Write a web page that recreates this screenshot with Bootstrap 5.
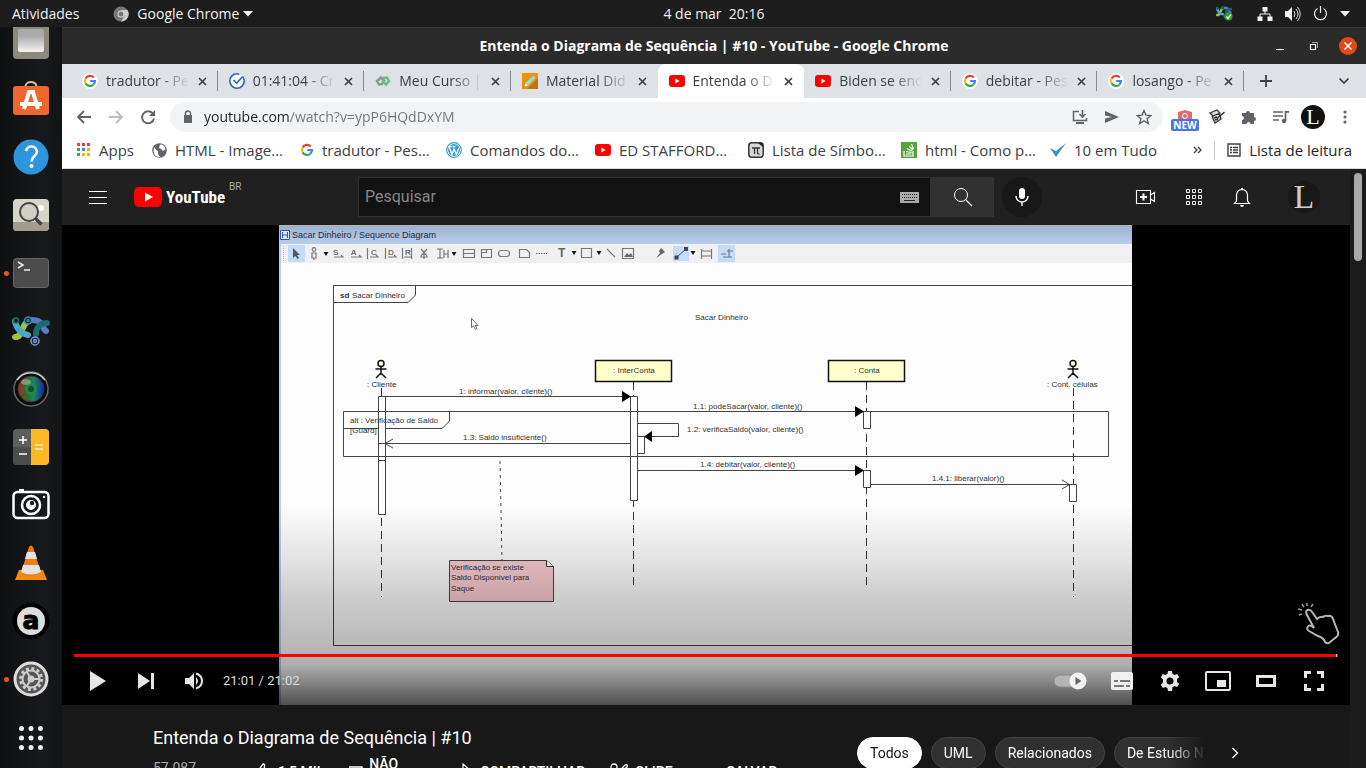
<!DOCTYPE html>
<html lang="pt-BR">
<head>
<meta charset="utf-8">
<meta name="viewport" content="width=device-width, initial-scale=1">
<title>Entenda o Diagrama de Sequência | #10 - YouTube</title>
<link rel="stylesheet" href="https://cdn.jsdelivr.net/npm/bootstrap@5.3.0/dist/css/bootstrap.min.css">
<style>
:root{--dock:62px}
body{font-family:"Open Sans","Noto Sans",sans-serif;font-size:14px;line-height:20px;background:#181818;color:#3c4043}
button{background:none;border:0;padding:0;color:inherit}
svg{display:block;flex:none}
a{color:inherit;text-decoration:none}
.topbar{display:grid;grid-template-columns:1fr auto 1fr;height:27px;flex:none;background:#1d1d1d;color:#f2f2f2;padding:0 16px}
.topbar .launcher{margin-left:34px}
.clock{padding-left:var(--dock)}
.dock{width:var(--dock);flex:none;background:linear-gradient(90deg,#0e1012,#17191c 70%,#111315);overflow:hidden}
.dock button{height:58px;flex:none;position:relative;width:100%;display:grid;place-items:center}
.dock .apps-grid{height:60px}
.running::before{content:"";position:absolute;left:4px;top:27px;width:5px;height:5px;border-radius:50%;background:#e95420}
.titlebar{height:37px;flex:none;background:#2b2b2b;border-top:1px solid #3a3a3a;color:#fff;font-weight:700;display:grid;grid-template-columns:1fr auto 1fr;padding:0 9px}
.win-btns{gap:20px}
.win-close{width:18px;height:18px;border-radius:50%;background:#df4a16;display:grid;place-items:center}
.tabstrip{height:34px;flex:none;background:#dee1e6;padding:0 16px 0 9px}
.tabs{flex:0 1 1173px;min-width:0}
.tab{flex:1 1 0;min-width:0;height:34px;padding:0 11px;gap:8px;position:relative}
.tab:not(.active)::after{content:"";position:absolute;right:0;top:7px;height:20px;width:1px;background:#878b90}
.tab.pre::after{display:none}
.tab.active{background:#fff;border-radius:8px 8px 0 0}
.tab-title{flex:1;white-space:nowrap;overflow:hidden;-webkit-mask-image:linear-gradient(90deg,#000 62%,transparent);mask-image:linear-gradient(90deg,#000 62%,transparent)}
.toolbar{height:38px;flex:none;background:#fff;padding:0 15px;color:#5f6368}
.toolbar .nav-btns{gap:18px;margin-right:15px}
.omnibox{height:30px;border-radius:15px;background:#f1f3f4;padding:0 11px 0 10px;gap:8px}
.omnibox input{border:0;outline:0;flex:1;min-width:0;background:linear-gradient(90deg,#202124 85px,#70757a 85px);-webkit-background-clip:text;background-clip:text;-webkit-text-fill-color:transparent;padding:0}
.omnibox .acts{gap:16px}
.exts{gap:8px;margin-left:10px;margin-right:-6px}
.exts>button{width:24px;height:24px;display:grid;place-items:center;position:relative}
.new-tag{position:absolute;left:-2px;bottom:-2px;width:28px;height:12px;border-radius:2px;background:#4c74e8;color:#fff;font-size:10px;line-height:12px;font-weight:700}
.bookmarks{height:33px;flex:none;background:#fff;border-bottom:1px solid #dadce0;padding:0 14px 0 15px;display:grid;grid-template-columns:75px 148px 146px 149px 153px 153px 149px 1fr auto;white-space:nowrap;font-size:15px}
.bookmarks a,.bookmarks>div{gap:8px;height:28px}
.page{background:#181818;overflow:hidden;font-family:Roboto,"Liberation Sans",sans-serif;color:#fff}
.masthead{height:56px;flex:none;background:#202020;padding:0 30px 0 26px}
.brand{flex:0 0 270px;gap:26px}
.wordmark{font-family:"Roboto Condensed","Liberation Sans Narrow","Roboto",sans-serif;font-weight:700;font-size:17px;line-height:24px}
.country{font-size:10px;line-height:12px;color:#aaa;margin:-20px 0 0 4px}
.search{flex:0 1 684px;gap:8px}
.search-box{height:40px;background:#121212;border:1px solid #303030;padding:0 11px 0 6px}
.search-box input{background:none;border:0;outline:0;color:#fff;font-size:16px;flex:1;min-width:0;padding:0}
.search-box input::placeholder{color:#888;opacity:1}
.search-btn{width:63px;height:40px;background:#313131;display:grid;place-items:center}
.mic{width:40px;height:40px;border-radius:50%;background:#181818;display:grid;place-items:center}
.mast-right{gap:24px}
.mast-right>button{width:24px;height:24px;display:grid;place-items:center}
.avatar{border-radius:50%;font-family:"Liberation Serif",serif;color:#ccc;background:#181818;overflow:hidden}
.mast-right>.avatar{width:32px;height:32px;margin-left:10px;font-size:34px;line-height:28px}
.exts>.avatar{background:#111;color:#fff;font-size:22px;line-height:22px}
.player{height:62.5vh;min-height:480px;background:#000;position:relative;flex:none}
.player>svg.film{height:100%;width:100%}
.shade{position:absolute;left:0;right:0;bottom:0;height:200px;background:linear-gradient(rgba(0,0,0,0),rgba(0,0,0,.11) 28%,rgba(0,0,0,.2) 48%,rgba(0,0,0,.27) 70%,rgba(0,0,0,.31) 80%,rgba(0,0,0,.5) 90%,rgba(0,0,0,.69))}
.controls{position:absolute;left:12px;right:12px;bottom:0}
.seek{appearance:none;-webkit-appearance:none;display:block;width:100%;height:3px;margin:0;background:red}
.seek::-webkit-slider-thumb{-webkit-appearance:none;width:1px;height:3px;background:#ccc}
.controls button{width:48px;height:48px;display:grid;place-items:center}
.time{font-size:13px;color:#ddd;margin-left:5px}
.hand{position:absolute;right:10px;bottom:60px}
.below{max-width:1106px;width:100%;gap:24px}
.primary{min-width:0;padding-top:21px}
.video-title{font-size:18px;line-height:24px;font-weight:400;margin:0}
.views{width:87px;color:#aaa;line-height:32px;margin-right:14px}
.actions{font-size:14px;line-height:16px;font-weight:500;height:40px;margin-top:2px}
.actions button{display:flex;align-items:center;text-align:left;gap:6px;font-weight:500;flex:none}
.actions .dislike{width:84px;gap:5px}
.side{flex:0 0 402px;padding-top:32px}
.chips{gap:9px;flex:0 0 350px;overflow:hidden;-webkit-mask-image:linear-gradient(90deg,#000 310px,transparent 350px);mask-image:linear-gradient(90deg,#000 310px,transparent 350px)}
.chip{height:32px;border-radius:16px;padding:0 12px;background:#303030;border:1px solid #444;font-size:14px;white-space:nowrap;flex:none}
.chip.on{background:#fff;color:#111;border-color:#fff}
.scroller{width:16px;flex:none;background:#1b1b1b;padding:4px}
.scroller div{height:88px;border-radius:4px;background:#a9a9a9}
.dg text{font-family:"Liberation Sans",Arial,sans-serif;font-size:8px;fill:#333}
.dg text.cap{font-size:9px;fill:#1e2a44}
.dg .ln{fill:none;stroke:#444;stroke-width:1}
.dg .wh{fill:#fff;stroke:#444;stroke-width:1}
</style>
</head>
<body class="vh-100 d-flex flex-column overflow-hidden">

<svg width="0" height="0" class="position-absolute" aria-hidden="true">
  <symbol id="g" viewBox="0 0 16 16"><circle cx="8" cy="8" r="8" fill="#fff"/><g fill="none" stroke-width="2.2"><path d="M11.8 4.6A5 5 0 0 0 3.6 5.6" stroke="#ea4335"/><path d="M3.6 5.6a5 5 0 0 0 0 4.8" stroke="#fbbc05"/><path d="M3.6 10.4a5 5 0 0 0 7.7 1.3" stroke="#34a853"/><path d="M11.3 11.7A5 5 0 0 0 13 8H8.2" stroke="#4285f4"/></g></symbol>
  <symbol id="yt" viewBox="0 0 16 16"><rect y="2" width="16" height="12" rx="3.2" fill="#f00"/><path d="M6.4 5.6v4.8L10.6 8z" fill="#fff"/></symbol>
  <symbol id="x" viewBox="0 0 9 9"><path d="M1 1l7 7M8 1L1 8" stroke="#3c4043" stroke-width="1.7"/></symbol>
  <symbol id="jelly" viewBox="0 0 38 30"><g fill="none" stroke-width="6" stroke-linecap="round"><path d="M20 4q8 0 10 5t4 6" stroke="#5a7bc0"/><path d="M3 21c8 1 6-14 14-16" stroke="#9cc53b"/><path d="M3 5c1 8 7 13 13 14" stroke="#4aa8c8"/><path d="M24 18c0-8 6-11 11-11" stroke="#1d6a6e"/></g><g fill="#17191c" stroke-width="1.5"><circle cx="16" cy="4.500" r="3.500" stroke="#2d8fb0"/><circle cx="16" cy="4.500" r="1" stroke="#2d8fb0"/><circle cx="23" cy="25" r="4" stroke="#7a98d8"/><circle cx="23" cy="25" r="1.500" stroke="#7a98d8"/><circle cx="4" cy="4.500" r="2.500" stroke="#1d6a6e"/></g></symbol>
</svg>

<header class="topbar align-items-center">
  <div class="d-flex align-items-center" style="margin-left:-4px">
    <button>Atividades</button>
    <button class="launcher d-flex align-items-center">
      <svg class="me-2" width="16" height="16" viewBox="0 0 16 16"><circle cx="8" cy="8" r="7.500" fill="#777"/><path d="M8 4h6.500A7.500 7.500 0 0 1 8 15.500L11.500 10z" fill="#ccc"/><circle cx="8" cy="8" r="3.500" fill="#ddd"/><circle cx="8" cy="8" r="2.500" fill="#777"/></svg>
      <span>Google Chrome</span>
      <svg class="ms-1" width="10" height="6" viewBox="0 0 10 6"><path d="M0 0h10L5 5.500z" fill="#f2f2f2"/></svg>
    </button>
  </div>
  <div class="clock">4 de mar&nbsp; 20:16</div>
  <div class="d-flex align-items-center justify-content-end gap-2">
    <svg class="me-3" width="17" height="15" viewBox="0 0 17 15"><use href="#jelly" width="16" height="13"/><circle cx="12.500" cy="10.500" r="4" fill="#2f9e2f"/><path d="M10.500 10.500l1.500 2 3-4" stroke="#fff" stroke-width="1.300" fill="none"/></svg>
    <svg class="me-1" width="16" height="14" viewBox="0 0 16 14"><path d="M8 4v3M3 10V7h10v3" stroke="#f2f2f2" fill="none"/><path d="M5.500 0h5v4.500h-5zM.500 9.500h5V14h-5zM10.500 9.500h5V14h-5z" fill="#f2f2f2"/></svg>
    <svg class="me-1" width="16" height="16" viewBox="0 0 16 16"><path d="M0 5h3l4-4v14l-4-4H0z" fill="#f2f2f2"/><path d="M9 5q2 3 0 6M11 3q4 5 0 10M12.500 1q5.500 7 0 14" stroke="#ddd" fill="none"/></svg>
    <svg class="me-1" width="15" height="15" viewBox="0 0 15 15"><path d="M4.500 2.500a6 6 0 1 0 6 0M7.500 0v7" stroke="#f2f2f2" stroke-width="1.200" fill="none"/></svg>
    <svg width="10" height="6" viewBox="0 0 10 6"><path d="M0 0h10L5 5.500z" fill="#f2f2f2"/></svg>
  </div>
</header>

<div class="d-flex flex-grow-1" style="min-height:0">
  <nav class="dock d-flex flex-column justify-content-end align-items-center" aria-label="Dock">
    <button aria-label="Arquivos"><svg width="36" height="36" viewBox="0 0 36 36"><defs><linearGradient id="fl" x2="0" y2="1"><stop offset=".3" stop-color="#aaa"/><stop offset="1" stop-color="#f6f6f6"/></linearGradient></defs><rect width="36" height="36" rx="4" fill="#8d897c"/><rect x="5" y="6" width="26" height="23" rx="2" fill="url(#fl)"/></svg></button>
    <button aria-label="Ubuntu Software"><svg width="36" height="36" viewBox="0 0 36 36"><path d="M12 8q0-7 6-7t6 7" fill="none" stroke="#dcc9a4" stroke-width="1.800"/><rect y="5" width="36" height="29" rx="3" fill="#f0662f"/><path d="M11 28l5-17h4l5 17M7 23h22" fill="none" stroke="#fff" stroke-width="4"/></svg></button>
    <button aria-label="Ajuda"><svg width="36" height="36" viewBox="0 0 36 36"><circle cx="18" cy="18" r="17.500" fill="#2e94dd"/><path d="M13 12q1-4.500 5.500-4.500T24 12.500c0 4.500-5.500 4.500-5.500 10" fill="none" stroke="#fff" stroke-width="2.600"/><circle cx="18.500" cy="27" r="2" fill="#fff"/></svg></button>
    <button aria-label="Visualizador"><svg width="36" height="32" viewBox="0 0 36 32"><rect width="36" height="32" rx="4" fill="#d5d5c9"/><path d="M0 23h36v5q0 4-4 4H4q-4 0-4-4z" fill="#a39c8b"/><circle cx="28" cy="9" r="3" fill="#fff"/><circle cx="16" cy="13" r="9" fill="#cfcfc8" stroke="#444" stroke-width="2"/><path d="M22.500 19.500l6 6" stroke="#444" stroke-width="3.500"/></svg></button>
    <button class="running" aria-label="Terminal"><svg width="36" height="30" viewBox="0 0 36 30"><rect x=".500" y=".500" width="35" height="29" rx="3" fill="#4b4b4b" stroke="#686868"/><path d="M5 4l5 3-5 3M11 12h6" stroke="#eee" stroke-width="1.500" fill="none"/></svg></button>
    <button aria-label="Astah"><svg width="38" height="30"><use href="#jelly"/></svg></button>
    <button aria-label="Câmera"><svg width="38" height="38" viewBox="0 0 38 38"><defs><linearGradient id="rb"><stop stop-color="#b3261e"/><stop offset=".35" stop-color="#2b6b2b"/><stop offset=".6" stop-color="#1c8a5a"/><stop offset="1" stop-color="#1226b8"/></linearGradient></defs><circle cx="19" cy="19" r="17" fill="#0a0a0a" stroke="#666" stroke-width="1.500"/><path d="M5 10a17 17 0 0 1 28 0" fill="none" stroke="#ccc" stroke-width="1.500"/><circle cx="19" cy="19" r="13" fill="url(#rb)" stroke="#333"/><circle cx="19" cy="19" r="6" fill="#1f8a4c"/><circle cx="19" cy="19" r="3" fill="#124e30"/><ellipse cx="14" cy="12" rx="5" ry="3" fill="#fff" opacity=".35"/></svg></button>
    <button aria-label="Calculadora"><svg width="36" height="36" viewBox="0 0 36 36"><rect width="36" height="36" rx="4" fill="#5e5e5e"/><path d="M0 18h18v18H4q-4 0-4-4z" fill="#4d4d4d"/><path d="M18 0h14q4 0 4 4v28q0 4-4 4H18z" fill="#fdb827"/><path d="M6 11h8M10 7v8M6 25h8" stroke="#fff" stroke-width="1.500"/><path d="M22 16h8M22 20h8" stroke="#ffe3a0" stroke-width="1.800"/></svg></button>
    <button aria-label="Webcam"><svg width="38" height="34" viewBox="0 0 38 34"><rect x="1.500" y="4" width="35" height="26" rx="4" fill="none" stroke="#fff" stroke-width="2.500"/><path d="M7 1h5v3H7z" fill="#fff"/><circle cx="19" cy="17" r="9" fill="none" stroke="#fff" stroke-width="2.500"/><circle cx="19" cy="17" r="5" fill="#fff"/><circle cx="20" cy="15" r="2.200" fill="#17191c"/><circle cx="32" cy="9" r="1.200" fill="#fff"/></svg></button>
    <button aria-label="VLC"><svg width="34" height="36" viewBox="0 0 34 36"><path d="M5 25h24l4 10H1z" fill="#f28a0e"/><path d="M15 2q2-3 4 0l8 26q-10 6-20 0z" fill="#f07d12"/><path d="M13 7h8l2 7H11zM9 20h16l2 7q-10 5-20 0z" fill="#e3e3e3"/></svg></button>
    <button aria-label="Anki"><svg width="38" height="38" viewBox="0 0 38 38"><circle cx="19" cy="19" r="18.500" fill="#000"/><circle cx="19" cy="19" r="14" fill="#ddd"/><text x="19" y="27" text-anchor="middle" font-family="DejaVu Sans,sans-serif" font-weight="700" font-size="25" stroke="#000">a</text></svg></button>
    <button class="running" aria-label="Configurações"><svg width="36" height="36" viewBox="0 0 36 36"><circle cx="18" cy="18" r="16" fill="#555" stroke="#ddd" stroke-width="3"/><circle cx="18" cy="18" r="10.500" fill="none" stroke="#ccc" stroke-width="3" stroke-dasharray="3 2.500"/><circle cx="18" cy="18" r="8.500" fill="none" stroke="#ccc" stroke-width="2"/><circle cx="18" cy="18" r="3.500" fill="#ccc"/><path d="M18 18l-4-7M18 18l-4 7M18 18h8" stroke="#ccc" stroke-width="2"/></svg></button>
    <button class="apps-grid" aria-label="Mostrar aplicativos"><svg width="24" height="24" viewBox="0 0 24 24"><path d="M2.500 2.500h.01M12 2.500h.01M21.500 2.500h.01M2.500 12h.01M12 12h.01M21.500 12h.01M2.500 21.500h.01M12 21.500h.01M21.500 21.500h.01" stroke="#f2f2f2" stroke-width="5" stroke-linecap="round"/></svg></button>
  </nav>

  <div class="d-flex flex-column flex-grow-1" style="min-width:0">
    <div class="titlebar align-items-center">
      <span></span><span>Entenda o Diagrama de Sequência | #10 - YouTube - Google Chrome</span>
      <div class="win-btns d-flex align-items-center justify-content-end">
        <button class="me-1" aria-label="Minimizar"><svg width="10" height="8" viewBox="0 0 10 8"><path d="M1 7.500h8" stroke="#fff"/></svg></button>
        <button aria-label="Restaurar"><svg width="10" height="10" viewBox="0 0 10 10"><path d="M1.500 3.500h5v5h-5z" stroke="#fff" fill="none" stroke-width="1.200"/><path d="M3 1.500h5.500V7" stroke="#aaa" fill="none"/></svg></button>
        <button class="win-close" aria-label="Fechar"><svg width="8" height="8" viewBox="0 0 8 8"><path d="M.500.500l7 7M7.500.500l-7 7" stroke="#fff" stroke-width="1.500"/></svg></button>
      </div>
    </div>

    <div class="tabstrip d-flex align-items-center">
      <div class="tabs d-flex">
        <div class="tab d-flex align-items-center"><svg width="16" height="16"><use href="#g"/></svg><span class="tab-title">tradutor - Pe</span><button aria-label="Fechar"><svg width="9" height="9"><use href="#x"/></svg></button></div>
        <div class="tab d-flex align-items-center"><svg width="16" height="16" viewBox="0 0 16 16"><circle cx="8" cy="8" r="7.200" fill="#fff" stroke="#2f62c4" stroke-width="1.600" stroke-dasharray="36 4"/><path d="M4.500 7l3.200 3 5.500-6" fill="none" stroke="#2f62c4" stroke-width="1.600"/></svg><span class="tab-title">01:41:04 - Cr</span><button aria-label="Fechar"><svg width="9" height="9"><use href="#x"/></svg></button></div>
        <div class="tab d-flex align-items-center"><svg width="16" height="16" viewBox="0 0 16 16"><g fill="none" stroke-width="2.500"><path d="M8 11L4 11.500 2 8l4-3.500 4 4" stroke="#8b9a90"/><path d="M7 8l4 3.500L14 8l-2-3.500-4 .500" stroke="#6dbb83"/></g></svg><span class="tab-title">Meu Curso |</span><button aria-label="Fechar"><svg width="9" height="9"><use href="#x"/></svg></button></div>
        <div class="tab pre d-flex align-items-center"><svg width="16" height="16" viewBox="0 0 16 16"><path d="M0 0h16v16H0z" fill="#e8930c"/><path d="M16 5v11H5z" fill="#bf7406"/><path d="M4 12l8-8" stroke="#8fe3c8" stroke-width="3.500"/><path d="M2.500 13.500l1-3 2 2z" fill="#fff"/><path d="M11 3l2 2" stroke="#f4a0b5" stroke-width="2"/></svg><span class="tab-title">Material Did</span><button aria-label="Fechar"><svg width="9" height="9"><use href="#x"/></svg></button></div>
        <div class="tab active d-flex align-items-center"><svg width="16" height="16"><use href="#yt"/></svg><span class="tab-title">Entenda o D</span><button aria-label="Fechar"><svg width="9" height="9"><use href="#x"/></svg></button></div>
        <div class="tab d-flex align-items-center"><svg width="16" height="16"><use href="#yt"/></svg><span class="tab-title">Biden se enc</span><button aria-label="Fechar"><svg width="9" height="9"><use href="#x"/></svg></button></div>
        <div class="tab d-flex align-items-center"><svg width="16" height="16"><use href="#g"/></svg><span class="tab-title">debitar - Pes</span><button aria-label="Fechar"><svg width="9" height="9"><use href="#x"/></svg></button></div>
        <div class="tab d-flex align-items-center"><svg width="16" height="16"><use href="#g"/></svg><span class="tab-title">losango - Pe</span><button aria-label="Fechar"><svg width="9" height="9"><use href="#x"/></svg></button></div>
      </div>
      <button class="ms-3" aria-label="Nova guia"><svg width="12" height="12" viewBox="0 0 12 12"><path d="M6 0v12M0 6h12" stroke="#3c4043" stroke-width="1.800"/></svg></button>
      <button class="ms-auto" aria-label="Pesquisar guias"><svg width="12" height="8" viewBox="0 0 12 8"><path d="M1.500 1.500L6 6l4.500-4.500" stroke="#3c4043" stroke-width="1.700" fill="none"/></svg></button>
    </div>

    <div class="toolbar d-flex align-items-center">
      <div class="nav-btns d-flex">
        <button aria-label="Voltar"><svg width="14" height="14" viewBox="0 0 14 14"><path d="M14 7H1.500M7 1L1 7l6 6" fill="none" stroke="#5f6368" stroke-width="1.800"/></svg></button>
        <button aria-label="Avançar"><svg width="14" height="14" viewBox="0 0 14 14"><path d="M0 7h12.500M7 1l6 6-6 6" fill="none" stroke="#babcbe" stroke-width="1.800"/></svg></button>
        <button aria-label="Recarregar"><svg width="14" height="14" viewBox="0 0 14 14"><path d="M11.800 3.500A6 6 0 1 0 13 8.500" fill="none" stroke="#5f6368" stroke-width="1.900"/><path d="M14 0v6H8z" fill="#5f6368"/></svg></button>
      </div>
      <div class="omnibox d-flex align-items-center flex-grow-1">
        <svg width="16" height="14" viewBox="0 0 16 14"><path d="M4 5h8v8H4z" fill="#5f6368"/><path d="M5.500 6V3.500a2.500 2.500 0 0 1 5 0V6" fill="none" stroke="#5f6368" stroke-width="1.500"/></svg>
        <input type="text" aria-label="Endereço" value="youtube.com/watch?v=ypP6HQdDxYM">
        <div class="acts d-flex align-items-center">
          <button aria-label="Instalar"><svg width="16" height="16" viewBox="0 0 16 16"><path d="M7 2.500H1.500v9h13V9" fill="none" stroke="#5f6368" stroke-width="1.500"/><path d="M4 14h8" stroke="#5f6368" stroke-width="2"/><path d="M10.500 1v6.500M7.500 5l3 3 3-3" fill="none" stroke="#5f6368" stroke-width="1.600"/></svg></button>
          <button aria-label="Enviar"><svg width="16" height="16" viewBox="0 0 16 16"><path d="M1 2l14 6-14 6V9.500L8 8 1 6.500z" fill="#5f6368"/></svg></button>
          <button aria-label="Favorito"><svg width="16" height="16" viewBox="0 0 16 16"><path d="M8 1.500l1.900 4.600 4.900.400-3.700 3.200 1.200 4.800L8 11.900l-4.300 2.600 1.200-4.800L1.200 6.500l4.900-.400z" fill="none" stroke="#5f6368" stroke-width="1.400"/></svg></button>
        </div>
      </div>
      <div class="exts d-flex align-items-center">
        <button aria-label="Bloqueador"><svg width="16" height="16" viewBox="0 0 16 16"><path d="M1 3l7-2 7 2v8H1z" fill="#e5686c"/><circle cx="8" cy="7" r="2.500" fill="none" stroke="#fff"/></svg><span class="new-tag">NEW</span></button>
        <button aria-label="Notas"><svg width="16" height="16" viewBox="0 0 16 16"><path d="M1 4l7-3 3 3-7 3zM3 7l3 7 6-4-2-6" fill="#ddd" stroke="#333" stroke-width="1.300"/><path d="M5 9l3-1M6 11l3-1M15.500 3L8 9.500" fill="none" stroke="#333" stroke-width="1.500"/></svg></button>
        <button aria-label="Extensões"><svg width="16" height="16" viewBox="0 0 16 16"><path d="M1 4h4a2 2 0 1 1 4 0h4v4a2 2 0 1 1 0 4v3H9.500a2 2 0 0 0-4 0H1v-4a2 2 0 0 0 0-4z" fill="#5f6368"/></svg></button>
        <button aria-label="Mídia"><svg width="16" height="14" viewBox="0 0 16 14"><path d="M0 2h10M0 6h10M0 10h6M12.500 11V1.800H16" fill="none" stroke="#5f6368" stroke-width="1.700"/><circle cx="11" cy="11" r="2.200" fill="#5f6368"/></svg></button>
        <button class="avatar" aria-label="Perfil">L</button>
        <button aria-label="Menu"><svg width="4" height="14" viewBox="0 0 4 14"><path d="M2 2h.01M2 7h.01M2 12h.01" stroke="#5f6368" stroke-width="3.200" stroke-linecap="round"/></svg></button>
      </div>
    </div>

    <nav class="bookmarks" aria-label="Favoritos">
      <a href="#" class="d-flex align-items-center"><svg width="14" height="14" viewBox="0 0 14 14"><path d="M0 0h3v3H0zM5 0h3v3H5zM10 0h3v3h-3z" fill="#ea4335"/><path d="M0 5h3v3H0zM0 10h3v3H0z" fill="#34a853"/><path d="M5 5h3v3H5z" fill="#4285f4"/><path d="M10 5h3v3h-3zM5 10h3v3H5zM10 10h3v3h-3z" fill="#fbae05"/></svg>Apps</a>
      <a href="#" class="d-flex align-items-center"><svg width="15" height="15" viewBox="0 0 15 15"><circle cx="7.500" cy="7.500" r="7.300" fill="#5f6368"/><path d="M2 4q3 4 4 4v3l2 3q-6 0-6.500-6zM8 1.500q5 0 5.500 5L11 8 9 6l-2-1z" fill="#fff"/></svg>HTML - Image…</a>
      <a href="#" class="d-flex align-items-center"><svg width="14" height="16" viewBox="1 0 14 16"><use href="#g" width="16" height="16"/></svg>tradutor - Pes…</a>
      <a href="#" class="d-flex align-items-center"><svg width="16" height="16" viewBox="0 0 16 16"><circle cx="8" cy="8" r="7.300" fill="#fff" stroke="#3a9bd6" stroke-width="1.200"/><circle cx="8" cy="8" r="6" fill="#3a9bd6"/><path d="M3 4.500l3 8L8 7l2.500 5.500 2.500-7M2.500 4.500h3M6.500 4.500h3" fill="none" stroke="#fff" stroke-width="1.300"/></svg>Comandos do…</a>
      <a href="#" class="d-flex align-items-center"><svg width="16" height="16"><use href="#yt"/></svg>ED STAFFORD…</a>
      <a href="#" class="d-flex align-items-center"><svg width="16" height="16" viewBox="0 0 16 16"><rect x=".800" y=".800" width="14.400" height="14.400" rx="3" fill="#d8d8d8" stroke="#333" stroke-width="1.500"/><path d="M4 6h8M6.500 6v6M9.500 6v5q0 1 2 1" stroke="#333" stroke-width="1.300" fill="none"/><path d="M10 1h5v4z" fill="#222"/></svg>Lista de Símbo…</a>
      <a href="#" class="d-flex align-items-center"><svg width="16" height="16" viewBox="0 0 16 16"><path d="M0 0h16v16H0z" fill="#55a63a"/><path d="M3 9v5h9V9M5 12h5.500M5 9.500l5.500 1M6 6.500l5 2.500M8 4l4 4M10.500 2l2 5" fill="none" stroke="#fff" stroke-width="1.200"/></svg>html - Como p…</a>
      <a href="#" class="d-flex align-items-center"><svg width="16" height="16" viewBox="0 0 16 16"><path d="M0 6l6 9L16 1 6 9z" fill="#3a8fd8"/></svg>10 em Tudo</a>
      <div class="d-flex align-items-center"><button aria-label="Mais favoritos"><svg width="9" height="8" viewBox="0 0 9 8"><path d="M1 1l3 3-3 3M5 1l3 3-3 3" fill="none" stroke="#3c4043" stroke-width="1.400"/></svg></button><div class="vr my-1 ms-1"></div>
        <a href="#" class="d-flex align-items-center ms-1 text-dark"><svg width="14" height="14" viewBox="0 0 14 14"><path d="M1 1h12v12H1zM3 4.500h2M6 4.500h5M3 7h2M6 7h5M3 9.500h2M6 9.500h5" fill="none" stroke="#3c4043" stroke-width="1.400"/></svg>Lista de leitura</a></div>
    </nav>

    <div class="d-flex flex-grow-1" style="min-height:0">
      <main class="page d-flex flex-column flex-grow-1" style="min-width:0">
        <header class="masthead d-flex align-items-center">
          <div class="brand d-flex align-items-center">
            <button aria-label="Menu"><svg width="20" height="14" viewBox="0 0 20 14"><path d="M1 1.500h18M1 7.500h18M1 13.500h18" stroke="#fff"/></svg></button>
            <a href="#" class="d-flex align-items-center"><svg class="me-1" width="28" height="20" viewBox="0 0 28 20"><rect width="28" height="20" rx="5" fill="#f00"/><path d="M11 5.500v9l8-4.500z" fill="#fff"/></svg><span class="wordmark">YouTube</span><span class="country">BR</span></a>
          </div>
          <form class="search d-flex align-items-center m-0">
            <div class="d-flex flex-grow-1">
              <div class="search-box d-flex align-items-center flex-grow-1"><input type="text" aria-label="Pesquisar" placeholder="Pesquisar"><svg width="19" height="11" viewBox="0 0 19 11"><path d="M0 0h19v11H0z" fill="#aaa"/><path d="M2 2.500h15M2 5.500h15" stroke="#222" stroke-dasharray="1 1"/><path d="M4 8.500h11" stroke="#222"/></svg></div>
              <button type="button" class="search-btn" aria-label="Buscar"><svg width="20" height="20" viewBox="0 0 20 20"><circle cx="8" cy="8" r="6.500" fill="none" stroke="#fff"/><path d="M12.500 12.500l6.500 6.500" stroke="#fff" stroke-width="1.200"/></svg></button>
            </div>
            <button type="button" class="mic" aria-label="Voz"><svg width="14" height="18" viewBox="0 0 14 18"><rect x="4" width="6" height="11" rx="3" fill="#fff"/><path d="M1 8a6 6 0 0 0 12 0M7 14v4" stroke="#fff" stroke-width="1.400" fill="none"/></svg></button>
          </form>
          <div class="mast-right d-flex align-items-center ms-auto">
            <button aria-label="Criar"><svg width="22" height="16" viewBox="0 0 22 16"><path d="M1.500 1.500h14v13h-14zM15.500 6l4-2.500v9l-4-2.500" fill="none" stroke="#fff" stroke-width="1.100"/><path d="M8.500 4.500v7M5 8h7" stroke="#fff" stroke-width="2"/></svg></button>
            <button aria-label="Apps"><svg width="17" height="17" viewBox="0 0 17 17"><path d="M.500.500h3v3h-3zM6.500.500h3v3h-3zM12.500.500h3v3h-3zM.500 6.500h3v3h-3zM6.500 6.500h3v3h-3zM12.500 6.500h3v3h-3zM.500 12.500h3v3h-3zM6.500 12.500h3v3h-3zM12.500 12.500h3v3h-3z" fill="none" stroke="#fff"/></svg></button>
            <button aria-label="Notificações"><svg width="18" height="20" viewBox="0 0 18 20"><path d="M1.500 16.500h15l-2-2.500V8.500Q14.500 3 9 2.500 3.500 3 3.500 8.500V14z" fill="none" stroke="#fff" stroke-width="1.200"/><path d="M7 18h4q-.500 2-2 2t-2-2zM8 1h2v2H8z" fill="#fff"/></svg></button>
            <button class="avatar" aria-label="Conta">L</button>
          </div>
        </header>

        <section class="player">
          <svg class="film dg" viewBox="279 225 854 480" role="img" aria-label="Diagrama de sequência">
            <defs><linearGradient id="tb" x2="0" y2="1"><stop stop-color="#9db2d2"/><stop offset="1" stop-color="#b9cdec"/></linearGradient><clipPath id="cp"><path d="M279 225h853v480H279z"/></clipPath></defs>
            <g clip-path="url(#cp)">
            <path d="M279 225h853v480H279z" fill="#fdfdfe"/>
            <path d="M279 244h2v461h-2z" fill="#b4cdf0"/>
            <path d="M279 225h853v1H279z" fill="#b9b5aa"/><path d="M279 226h853v18H279z" fill="url(#tb)"/><path d="M281 244h851v19H281z" fill="#f0eff2"/>
            <path d="M280.500 230.500h9v9h-9z" fill="#dfe8fa" stroke="#3a55a8"/><path d="M282.500 232v6M287.500 232v6M282.500 235h5" stroke="#3a55a8"/>
            <text class="cap" x="292" y="238">Sacar Dinheiro / Sequence Diagram</text>
            <path d="M288 245h17v17h-17zM673 246h16v15h-16zM718 245h17v17h-17z" fill="#c4dcf8"/>
            <path d="M283.500 246v15" stroke="#bbb" stroke-dasharray="1 1"/>
            <path d="M293 248v10l2.500-2 2 3 1.500-1-2-3h3z" fill="#556"/>
            <path d="M323.500 252h5l-2.500 4zM451.500 252h5l-2.500 4zM571.500 251h5l-2.500 4zM596.500 251h5l-2.500 4zM690.500 251h5l-2.500 4z" fill="#111"/>
            <g fill="none" stroke="#777" stroke-width="1.200">
              <circle cx="314" cy="249.500" r="1.800"/><path d="M312 253h4v5h-4zM314 258v2M334 257h9l-2-2M351 257h10l-2-2M367.500 248v11M370 257h8l-2-2M385.500 248v11M388 257h8l-2-2M402.500 248v11M411.500 248v11M404 257h7M421 249l6 7M427 249l-6 7M424 252v7M420 257l8 0M437 249h6M440 249v9M437 258h6M444 250v8M448 250v8M444 254h4M463.500 249.500h11v8h-11zM463.500 253.500h11M481.500 249.500h10v8h-10zM481.500 252.500h5v-3"/>
              <rect x="498.500" y="250.500" width="11" height="6" rx="3"/><path d="M519.500 249.500h7l3 3v5h-10zM581.500 248.500h10v9h-10zM607 249l8 8M622.500 248.500h11v10h-11z"/><path d="M536 253.500h11" stroke-dasharray="1.500 1"/><path d="M701.500 249v10M711.500 249v10M702 256h9M702 251h9M721 254h5M727 251h6M723 257h9M729 249v8"/>
            </g>
            <path d="M624 257l3-4 2 2 2-2 2 4zM656 258l4-5-1-2 2-3 4 4-3 2z" fill="#666"/>
            <path d="M677 257l9-8" stroke="#456" fill="none"/><path d="M674.500 255.500h4v4h-4zM684 247h4v4h-4z" fill="#445"/>
            <text x="333" y="255">S</text><text x="351" y="255">A</text><text x="371" y="255">C</text><text x="388" y="255">D</text><text x="405" y="255">R</text><text x="558" y="257" style="font-size:12px;font-weight:700;fill:#666">T</text>

            <path class="ln" d="M333.500 285.500H1150M333.500 285V645.500H1150M333.500 302.500H408l7.500-7.500v-9.500"/>
            <text x="340" y="298" font-weight="700">sd</text><text x="352" y="298">Sacar Dinheiro</text><text x="695" y="320">Sacar Dinheiro</text>
            <path d="M471.500 318.500v9l2-1.500 2 3.500 1.500-1-2-3h3z" fill="#fff" stroke="#444" stroke-width=".800"/>

            <g fill="none" stroke="#333" stroke-dasharray="8 5"><path d="M381.500 388V597M633.500 382V588M866.500 382V588M1073.500 388V597"/></g>
            <path d="M500 461L502 560" stroke="#444" stroke-dasharray="3 4"/>
            <path class="ln" d="M343.500 411.500H1108.500V456.500H343.500zM343.500 428.500H442l7.500-7.500v-9.500"/>
            <path class="wh" d="M378.500 396.500h7v118h-7zM630.500 396.500h7v104h-7zM863.500 411.500h7v17h-7zM863.500 470.500h7v17h-7zM1069.500 484.500h7v17h-7zM637.500 436.500h7v17h-7z"/>
            <path class="ln" d="M378 411.500h7M378 443.500h7M378 456.500h7M378 460.500h7M630 411.500h7M630 456.500h7M385 396.500H623M637 411.500H856M637.500 423.500H678.500V436.500H652M385 443.500H630M637 470.500H856M870 484.500H1069M393 439l-8 4.500 8 4.500M1062 480l7.500 4.500-7.500 4.500"/>
            <path d="M622 391l9 5.500-9 5.500zM855 406l9 5.500-9 5.500zM855 465l9 5.500-9 5.500zM652 431l-8 5.500 8 5.500z" fill="#000"/>
            <path d="M595.500 360.500h76v21h-76zM828.500 360.500h76v21h-76z" fill="#ffffcc" stroke="#111" stroke-width="1.500"/>
            <g fill="#fffde0" stroke="#111" stroke-width="1.500"><circle cx="381" cy="363.500" r="3"/><circle cx="1073" cy="363.500" r="3"/><path d="M381 367v6M375.500 369h11M376 378l5-5 5 5M1073 367v6M1067.500 369h11M1068 378l5-5 5 5" fill="none"/></g>
            <text x="367" y="387">: Cliente</text><text x="613" y="373">: InterConta</text><text x="854" y="373">: Conta</text><text x="1047" y="387">: Cont. células</text>
            <text x="459" y="394">1: informar(valor, cliente)()</text><text x="693" y="409">1.1: podeSacar(valor, cliente)()</text><text x="687" y="432">1.2: verificaSaldo(valor, cliente)()</text><text x="463" y="440">1.3: Saldo insuficiente()</text><text x="700" y="467">1.4: debitar(valor, cliente)()</text><text x="932" y="481">1.4.1: liberar(valor)()</text>
            <text x="350" y="423">alt : Verificação de Saldo</text><text x="350" y="433">[Guard]</text>
            <path d="M449.500 560.500h97l7 6v35h-104z" fill="#fbccd3" stroke="#444"/><path d="M546.500 560.500v6h7" fill="#fff" stroke="#333"/>
            <text x="451" y="570">Verificação se existe</text><text x="451" y="580">Saldo Disponível para</text><text x="451" y="591">Saque</text>
            </g>
          </svg>
          <div class="shade"></div>
          <svg class="hand" width="42" height="42" viewBox="0 0 42 42"><path d="M9 12Q7 8 9.500 7t5 2.500L19 16q3-3 6-2 2-2 5-1 4-1 5 3l5 13q1 4-3 6l-6 5q-2 1-4-1-1-4-7-6l-9-5q-3-2-1-4.500t6 1.500z" fill="none" stroke="#b4b8b8" stroke-width="2"/><path d="M1 12l3-1M0 6l4 1M4 1l2 3M9 0v3M15 1l-2 3" stroke="#999" stroke-width="1.500"/></svg>
          <div class="controls">
            <input class="seek" type="range" min="0" max="1262" value="1261" aria-label="Posição">
            <div class="d-flex align-items-center">
              <button aria-label="Reproduzir"><svg width="16" height="20" viewBox="0 0 16 20"><path d="M0 0l16 10L0 20z" fill="#e6e6e6"/></svg></button>
              <button aria-label="Próximo"><svg width="16" height="16" viewBox="0 0 16 16"><path d="M0 0l12 8L0 16zM13 0h3v16h-3z" fill="#e6e6e6"/></svg></button>
              <button aria-label="Volume"><svg width="18" height="18" viewBox="0 0 18 18"><path d="M0 6h4l5-5v16l-5-5H0zM11 5q4 4 0 8z" fill="#e6e6e6"/><path d="M11 1.500q6 2 6 7.500t-6 7.500" fill="none" stroke="#e6e6e6" stroke-width="2"/></svg></button>
              <span class="time">21:01 / 21:02</span>
              <button class="ms-auto" aria-label="Reprodução automática"><svg width="34" height="18" viewBox="0 0 34 18"><rect x="1" y="3" width="28" height="12" rx="6" fill="#b5b5b5" stroke="#888"/><circle cx="25" cy="9" r="8.500" fill="#f2f2f2"/><path d="M22.500 5v8l6-4z" fill="#666"/></svg></button>
              <button class="ms-1" aria-label="Legendas"><svg width="22" height="18" viewBox="0 0 22 18"><rect width="22" height="18" rx="2" fill="#f0f0f0"/><path d="M3 9h4M9 9h10M3 14h10M15 14h4" stroke="#777" stroke-width="2"/></svg></button>
              <button aria-label="Configurações"><svg width="20" height="20" viewBox="0 0 20 20"><path d="M8 0h4l.5 2.800 2 1.100 2.700-1 2 3.400-2.200 1.800v2.800l2.200 1.800-2 3.400-2.700-1-2 1.100L12 20H8l-.5-2.800-2-1.100-2.700 1-2-3.400L3 11.400V8.600L.8 6.300l2-3.400 2.700 1 2-1.100zM10 6.500a3.500 3.500 0 1 0 0 7 3.500 3.500 0 0 0 0-7z" fill="#e6e6e6" fill-rule="evenodd"/></svg></button>
              <button aria-label="Miniplayer"><svg width="26" height="20" viewBox="0 0 26 20"><rect x="1" y="1" width="24" height="18" rx="1" fill="none" stroke="#e6e6e6" stroke-width="2"/><path d="M12 9h9v7h-9z" fill="#e6e6e6"/></svg></button>
              <button aria-label="Modo teatro"><svg width="20" height="12" viewBox="0 0 20 12"><path d="M1.500 1.500h17v9h-17z" fill="none" stroke="#e6e6e6" stroke-width="3"/></svg></button>
              <button aria-label="Tela cheia"><svg width="20" height="20" viewBox="0 0 20 20"><path d="M1.500 7V1.500H7M13 1.500h5.500V7M18.500 13v5.500H13M7 18.500H1.500V13" fill="none" stroke="#e6e6e6" stroke-width="3"/></svg></button>
            </div>
          </div>
        </section>

        <section class="below d-flex mx-auto">
          <div class="primary flex-grow-1">
            <h1 class="video-title">Entenda o Diagrama de Sequência | #10</h1>
            <div class="actions d-flex align-items-center">
              <span class="views fw-normal align-self-start">57.087 visualizações</span>
              <button class="me-4"><svg width="18" height="18" viewBox="0 0 18 18"><path d="M1 8h3v9H1zM4 8l5-7q2 0 1.500 2L10 7h6l-1 10H4" fill="none" stroke="#fff" stroke-width="1.300"/></svg>1,5 MIL</button>
              <button class="dislike"><svg width="16" height="18" viewBox="0 0 16 18"><path d="M1 4h13v11H1" fill="none" stroke="#fff" stroke-width="1.300"/></svg>NÃO GOSTEI</button>
              <button class="ms-4"><svg width="18" height="18" viewBox="0 0 18 18"><path d="M7 1l9 8-9 7v-4q-4 0-6 4 0-8 6-10z" fill="none" stroke="#fff" stroke-width="1.200"/></svg>COMPARTILHAR</button>
              <button class="ms-4"><svg width="20" height="20" viewBox="0 0 20 20"><circle cx="5" cy="5" r="3" fill="none" stroke="#fff" stroke-width="1.300"/><circle cx="5" cy="15" r="3" fill="none" stroke="#fff" stroke-width="1.300"/><path d="M7 7l11 10M7 13L16 3q3-1 2 2l-8 6" fill="none" stroke="#fff" stroke-width="1.300"/></svg>CLIPE</button>
              <button class="ms-4"><svg width="24" height="10" viewBox="0 0 24 10"><path d="M2 4h12M2 8h8M17 4v6" stroke="#fff"/></svg>SALVAR</button>
            </div>
          </div>
          <div class="side d-flex align-items-center align-self-start">
            <div class="chips d-flex">
              <button class="chip on">Todos</button><button class="chip">UML</button><button class="chip">Relacionados</button><button class="chip">De Estudo N</button>
            </div>
            <button class="ms-4" aria-label="Avançar"><svg width="8" height="12" viewBox="0 0 8 12"><path d="M1.500 1l5 5-5 5" fill="none" stroke="#fff" stroke-width="1.300"/></svg></button>
          </div>
        </section>
      </main>
      <div class="scroller"><div></div></div>
    </div>
  </div>
</div>
<script src="https://cdn.jsdelivr.net/npm/bootstrap@5.3.0/dist/js/bootstrap.bundle.min.js"></script>
</body>
</html>
